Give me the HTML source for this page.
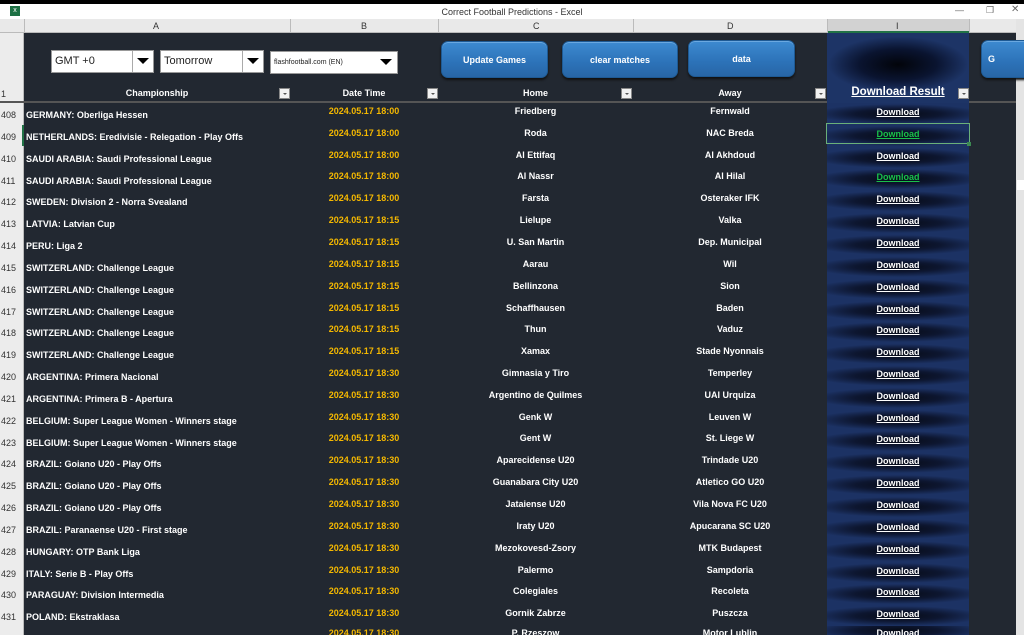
<!DOCTYPE html>
<html style="overflow:hidden;width:1024px;height:635px"><head><meta charset="utf-8"><style>
*{margin:0;padding:0;box-sizing:border-box}
body{width:1024px;height:635px;overflow:hidden;background:#222831;font-family:"Liberation Sans",sans-serif;position:relative}
.a{position:absolute}
.t{position:absolute;font-size:9px;font-weight:bold;color:#fff;white-space:nowrap;line-height:12px}
.c{text-align:center}
.dt{color:#f5b800}
.rn{position:absolute;left:0;width:24px;font-size:9px;color:#333;line-height:12px;padding-left:1px}
.dl{position:absolute;left:827px;width:142px;height:21.8px;background:radial-gradient(ellipse 85px 10px at 50% 50%,#070b16 0%,#0d1630 50%,#1c3264 100%)}
.dl span{display:block;text-align:center;font-size:9px;font-weight:bold;color:#fff;text-decoration:underline;line-height:12px;margin-top:3px}
.g span{color:#19c04a}
.btn{position:absolute;background:linear-gradient(#3d8ad0,#2c72b8 60%,#2866a6);border-radius:7px;color:#fff;font-size:9px;font-weight:bold;text-align:center;border:1px solid #1e5a94;box-shadow:inset 0 1px 0 #6aa8e0,0 2px 2px #111}
.dd{position:absolute;background:#fff;border:1px solid #999;font-size:11px;color:#222;line-height:20px;padding-left:3px}
.ar{position:absolute;right:0;top:0;width:21px;height:100%;border-left:1px solid #aaa;background:#fff}
.ar:after{content:"";position:absolute;left:4px;top:7px;border-left:6px solid transparent;border-right:6px solid transparent;border-top:6px solid #000}
.fb{position:absolute;top:88px;width:11px;height:11px;background:#f2f2f2;border:1px solid #888}
.fb:after{content:"";position:absolute;left:3px;top:4px;border-left:2px solid transparent;border-right:2px solid transparent;border-top:2px solid #555}
</style></head><body>
<div class="a" style="left:0;top:0;width:1024px;height:4px;background:#000"></div>
<div class="a" style="left:0;top:4px;width:1024px;height:15px;background:#fff"></div>
<div class="a" style="left:10px;top:6px;width:10px;height:10px;background:#1d7044;color:#fff;font-size:7px;line-height:10px;text-align:center">x</div>
<div class="a" style="left:0;top:6px;width:1024px;text-align:center;font-size:9px;color:#333;line-height:12px">Correct Football Predictions - Excel</div>
<div class="a" style="left:955px;top:5px;font-size:9px;color:#666">—</div>
<div class="a" style="left:986px;top:5px;font-size:9px;color:#666">❐</div>
<div class="a" style="left:1011px;top:4px;font-size:10px;color:#666">✕</div>
<div class="a" style="left:0;top:19px;width:1024px;height:14px;background:#e9e9e9;border-bottom:1px solid #bbb"></div>
<div class="a" style="left:827px;top:19px;width:142px;height:14px;background:#d2d2d2;border-bottom:2px solid #217346"></div>
<div class="a" style="left:290px;top:19px;width:1px;height:14px;background:#bbb"></div>
<div class="a" style="left:438px;top:19px;width:1px;height:14px;background:#bbb"></div>
<div class="a" style="left:633px;top:19px;width:1px;height:14px;background:#bbb"></div>
<div class="a" style="left:827px;top:19px;width:1px;height:14px;background:#bbb"></div>
<div class="a" style="left:969px;top:19px;width:1px;height:14px;background:#bbb"></div>
<div class="a" style="left:24px;top:19px;width:1px;height:14px;background:#bbb"></div>
<div class="a" style="left:153px;top:21px;font-size:9px;color:#333">A</div>
<div class="a" style="left:361px;top:21px;font-size:9px;color:#333">B</div>
<div class="a" style="left:533px;top:21px;font-size:9px;color:#333">C</div>
<div class="a" style="left:727px;top:21px;font-size:9px;color:#333">D</div>
<div class="a" style="left:896px;top:21px;font-size:9px;color:#333">I</div>
<div class="a" style="left:0;top:33px;width:24px;height:602px;background:#ececec;border-right:1px solid #bbb"></div>
<div class="a" style="left:0;top:101px;width:1016px;height:2px;background:#555"></div>
<div class="rn" style="top:88px">1</div>
<div class="a" style="left:1016px;top:19px;width:8px;height:616px;background:#e4e4e4"></div>
<div class="a" style="left:1017px;top:180px;width:7px;height:10px;background:#fff"></div>
<div class="a" style="left:827px;top:33px;width:142px;height:70px;background:radial-gradient(ellipse 70px 28px at 50% 45%,#02040a 0%,#0a1430 55%,#1d3466 100%)"></div>
<div class="a" style="left:827px;top:103px;width:142px;height:532px;background:#1d3466"></div>
<div class="dd" style="left:51px;top:50px;width:103px;height:23px">GMT +0<div class="ar"></div></div>
<div class="dd" style="left:160px;top:50px;width:104px;height:23px">Tomorrow<div class="ar"></div></div>
<div class="dd" style="left:270px;top:51px;width:128px;height:23px;font-size:7px;line-height:22px">flashfootball.com (EN)<div class="ar" style="border:none"></div></div>
<div class="btn" style="left:441px;top:41px;width:107px;height:37px;line-height:36px">Update Games</div>
<div class="btn" style="left:562px;top:41px;width:116px;height:37px;line-height:36px">clear matches</div>
<div class="btn" style="left:688px;top:40px;width:107px;height:37px;line-height:36px">data</div>
<div class="btn" style="left:981px;top:40px;width:50px;height:38px;line-height:36px;text-align:left;padding-left:6px">G</div>
<div class="t c" style="left:24px;top:87px;width:266px">Championship</div>
<div class="t c" style="left:290px;top:87px;width:148px">Date Time</div>
<div class="t c" style="left:438px;top:87px;width:195px">Home</div>
<div class="t c" style="left:633px;top:87px;width:194px">Away</div>
<div class="t c" style="left:827px;top:85px;width:142px;font-size:11.5px;line-height:14px;text-decoration:underline">Download Result</div>
<div class="fb" style="left:279px"></div><div class="fb" style="left:427px"></div><div class="fb" style="left:621px"></div><div class="fb" style="left:815px"></div><div class="fb" style="left:958px"></div>

<div class="rn" style="top:109px">408</div><div class="t" style="left:26px;top:109px">GERMANY: Oberliga Hessen</div><div class="t c dt" style="left:290px;top:105px;width:148px">2024.05.17 18:00</div><div class="t c" style="left:438px;top:105px;width:195px">Friedberg</div><div class="t c" style="left:633px;top:105px;width:194px">Fernwald</div><div class="dl" style="top:103px"><span>Download</span></div>
<div class="rn" style="top:131px">409</div><div class="t" style="left:26px;top:131px">NETHERLANDS: Eredivisie - Relegation - Play Offs</div><div class="t c dt" style="left:290px;top:127px;width:148px">2024.05.17 18:00</div><div class="t c" style="left:438px;top:127px;width:195px">Roda</div><div class="t c" style="left:633px;top:127px;width:194px">NAC Breda</div><div class="dl g" style="top:125px"><span>Download</span></div>
<div class="rn" style="top:153px">410</div><div class="t" style="left:26px;top:153px">SAUDI ARABIA: Saudi Professional League</div><div class="t c dt" style="left:290px;top:149px;width:148px">2024.05.17 18:00</div><div class="t c" style="left:438px;top:149px;width:195px">Al Ettifaq</div><div class="t c" style="left:633px;top:149px;width:194px">Al Akhdoud</div><div class="dl" style="top:147px"><span>Download</span></div>
<div class="rn" style="top:175px">411</div><div class="t" style="left:26px;top:175px">SAUDI ARABIA: Saudi Professional League</div><div class="t c dt" style="left:290px;top:170px;width:148px">2024.05.17 18:00</div><div class="t c" style="left:438px;top:170px;width:195px">Al Nassr</div><div class="t c" style="left:633px;top:170px;width:194px">Al Hilal</div><div class="dl g" style="top:168px"><span>Download</span></div>
<div class="rn" style="top:196px">412</div><div class="t" style="left:26px;top:196px">SWEDEN: Division 2 - Norra Svealand</div><div class="t c dt" style="left:290px;top:192px;width:148px">2024.05.17 18:00</div><div class="t c" style="left:438px;top:192px;width:195px">Farsta</div><div class="t c" style="left:633px;top:192px;width:194px">Osteraker IFK</div><div class="dl" style="top:190px"><span>Download</span></div>
<div class="rn" style="top:218px">413</div><div class="t" style="left:26px;top:218px">LATVIA: Latvian Cup</div><div class="t c dt" style="left:290px;top:214px;width:148px">2024.05.17 18:15</div><div class="t c" style="left:438px;top:214px;width:195px">Lielupe</div><div class="t c" style="left:633px;top:214px;width:194px">Valka</div><div class="dl" style="top:212px"><span>Download</span></div>
<div class="rn" style="top:240px">414</div><div class="t" style="left:26px;top:240px">PERU: Liga 2</div><div class="t c dt" style="left:290px;top:236px;width:148px">2024.05.17 18:15</div><div class="t c" style="left:438px;top:236px;width:195px">U. San Martin</div><div class="t c" style="left:633px;top:236px;width:194px">Dep. Municipal</div><div class="dl" style="top:234px"><span>Download</span></div>
<div class="rn" style="top:262px">415</div><div class="t" style="left:26px;top:262px">SWITZERLAND: Challenge League</div><div class="t c dt" style="left:290px;top:258px;width:148px">2024.05.17 18:15</div><div class="t c" style="left:438px;top:258px;width:195px">Aarau</div><div class="t c" style="left:633px;top:258px;width:194px">Wil</div><div class="dl" style="top:256px"><span>Download</span></div>
<div class="rn" style="top:284px">416</div><div class="t" style="left:26px;top:284px">SWITZERLAND: Challenge League</div><div class="t c dt" style="left:290px;top:280px;width:148px">2024.05.17 18:15</div><div class="t c" style="left:438px;top:280px;width:195px">Bellinzona</div><div class="t c" style="left:633px;top:280px;width:194px">Sion</div><div class="dl" style="top:278px"><span>Download</span></div>
<div class="rn" style="top:306px">417</div><div class="t" style="left:26px;top:306px">SWITZERLAND: Challenge League</div><div class="t c dt" style="left:290px;top:302px;width:148px">2024.05.17 18:15</div><div class="t c" style="left:438px;top:302px;width:195px">Schaffhausen</div><div class="t c" style="left:633px;top:302px;width:194px">Baden</div><div class="dl" style="top:300px"><span>Download</span></div>
<div class="rn" style="top:327px">418</div><div class="t" style="left:26px;top:327px">SWITZERLAND: Challenge League</div><div class="t c dt" style="left:290px;top:323px;width:148px">2024.05.17 18:15</div><div class="t c" style="left:438px;top:323px;width:195px">Thun</div><div class="t c" style="left:633px;top:323px;width:194px">Vaduz</div><div class="dl" style="top:321px"><span>Download</span></div>
<div class="rn" style="top:349px">419</div><div class="t" style="left:26px;top:349px">SWITZERLAND: Challenge League</div><div class="t c dt" style="left:290px;top:345px;width:148px">2024.05.17 18:15</div><div class="t c" style="left:438px;top:345px;width:195px">Xamax</div><div class="t c" style="left:633px;top:345px;width:194px">Stade Nyonnais</div><div class="dl" style="top:343px"><span>Download</span></div>
<div class="rn" style="top:371px">420</div><div class="t" style="left:26px;top:371px">ARGENTINA: Primera Nacional</div><div class="t c dt" style="left:290px;top:367px;width:148px">2024.05.17 18:30</div><div class="t c" style="left:438px;top:367px;width:195px">Gimnasia y Tiro</div><div class="t c" style="left:633px;top:367px;width:194px">Temperley</div><div class="dl" style="top:365px"><span>Download</span></div>
<div class="rn" style="top:393px">421</div><div class="t" style="left:26px;top:393px">ARGENTINA: Primera B - Apertura</div><div class="t c dt" style="left:290px;top:389px;width:148px">2024.05.17 18:30</div><div class="t c" style="left:438px;top:389px;width:195px">Argentino de Quilmes</div><div class="t c" style="left:633px;top:389px;width:194px">UAI Urquiza</div><div class="dl" style="top:387px"><span>Download</span></div>
<div class="rn" style="top:415px">422</div><div class="t" style="left:26px;top:415px">BELGIUM: Super League Women - Winners stage</div><div class="t c dt" style="left:290px;top:411px;width:148px">2024.05.17 18:30</div><div class="t c" style="left:438px;top:411px;width:195px">Genk W</div><div class="t c" style="left:633px;top:411px;width:194px">Leuven W</div><div class="dl" style="top:409px"><span>Download</span></div>
<div class="rn" style="top:437px">423</div><div class="t" style="left:26px;top:437px">BELGIUM: Super League Women - Winners stage</div><div class="t c dt" style="left:290px;top:432px;width:148px">2024.05.17 18:30</div><div class="t c" style="left:438px;top:432px;width:195px">Gent W</div><div class="t c" style="left:633px;top:432px;width:194px">St. Liege W</div><div class="dl" style="top:430px"><span>Download</span></div>
<div class="rn" style="top:458px">424</div><div class="t" style="left:26px;top:458px">BRAZIL: Goiano U20 - Play Offs</div><div class="t c dt" style="left:290px;top:454px;width:148px">2024.05.17 18:30</div><div class="t c" style="left:438px;top:454px;width:195px">Aparecidense U20</div><div class="t c" style="left:633px;top:454px;width:194px">Trindade U20</div><div class="dl" style="top:452px"><span>Download</span></div>
<div class="rn" style="top:480px">425</div><div class="t" style="left:26px;top:480px">BRAZIL: Goiano U20 - Play Offs</div><div class="t c dt" style="left:290px;top:476px;width:148px">2024.05.17 18:30</div><div class="t c" style="left:438px;top:476px;width:195px">Guanabara City U20</div><div class="t c" style="left:633px;top:476px;width:194px">Atletico GO U20</div><div class="dl" style="top:474px"><span>Download</span></div>
<div class="rn" style="top:502px">426</div><div class="t" style="left:26px;top:502px">BRAZIL: Goiano U20 - Play Offs</div><div class="t c dt" style="left:290px;top:498px;width:148px">2024.05.17 18:30</div><div class="t c" style="left:438px;top:498px;width:195px">Jataiense U20</div><div class="t c" style="left:633px;top:498px;width:194px">Vila Nova FC U20</div><div class="dl" style="top:496px"><span>Download</span></div>
<div class="rn" style="top:524px">427</div><div class="t" style="left:26px;top:524px">BRAZIL: Paranaense U20 - First stage</div><div class="t c dt" style="left:290px;top:520px;width:148px">2024.05.17 18:30</div><div class="t c" style="left:438px;top:520px;width:195px">Iraty U20</div><div class="t c" style="left:633px;top:520px;width:194px">Apucarana SC U20</div><div class="dl" style="top:518px"><span>Download</span></div>
<div class="rn" style="top:546px">428</div><div class="t" style="left:26px;top:546px">HUNGARY: OTP Bank Liga</div><div class="t c dt" style="left:290px;top:542px;width:148px">2024.05.17 18:30</div><div class="t c" style="left:438px;top:542px;width:195px">Mezokovesd-Zsory</div><div class="t c" style="left:633px;top:542px;width:194px">MTK Budapest</div><div class="dl" style="top:540px"><span>Download</span></div>
<div class="rn" style="top:568px">429</div><div class="t" style="left:26px;top:568px">ITALY: Serie B - Play Offs</div><div class="t c dt" style="left:290px;top:564px;width:148px">2024.05.17 18:30</div><div class="t c" style="left:438px;top:564px;width:195px">Palermo</div><div class="t c" style="left:633px;top:564px;width:194px">Sampdoria</div><div class="dl" style="top:562px"><span>Download</span></div>
<div class="rn" style="top:589px">430</div><div class="t" style="left:26px;top:589px">PARAGUAY: Division Intermedia</div><div class="t c dt" style="left:290px;top:585px;width:148px">2024.05.17 18:30</div><div class="t c" style="left:438px;top:585px;width:195px">Colegiales</div><div class="t c" style="left:633px;top:585px;width:194px">Recoleta</div><div class="dl" style="top:583px"><span>Download</span></div>
<div class="rn" style="top:611px">431</div><div class="t" style="left:26px;top:611px">POLAND: Ekstraklasa</div><div class="t c dt" style="left:290px;top:607px;width:148px">2024.05.17 18:30</div><div class="t c" style="left:438px;top:607px;width:195px">Gornik Zabrze</div><div class="t c" style="left:633px;top:607px;width:194px">Puszcza</div><div class="dl" style="top:605px"><span>Download</span></div>
<div class="t c dt" style="left:290px;top:627px;width:148px">2024.05.17 18:30</div><div class="t c" style="left:438px;top:627px;width:195px">P. Rzeszow</div><div class="t c" style="left:633px;top:627px;width:194px">Motor Lublin</div><div class="dl" style="top:626px;height:9px"><span style="margin-top:1px">Download</span></div>
<div class="a" style="left:826px;top:123px;width:144px;height:21px;border:1px solid #6ab07a"></div>
<div class="a" style="left:967px;top:142px;width:4px;height:4px;background:#3c8a52"></div>
<div class="a" style="left:22px;top:125px;width:2px;height:21px;background:#217346"></div>
</body></html>
